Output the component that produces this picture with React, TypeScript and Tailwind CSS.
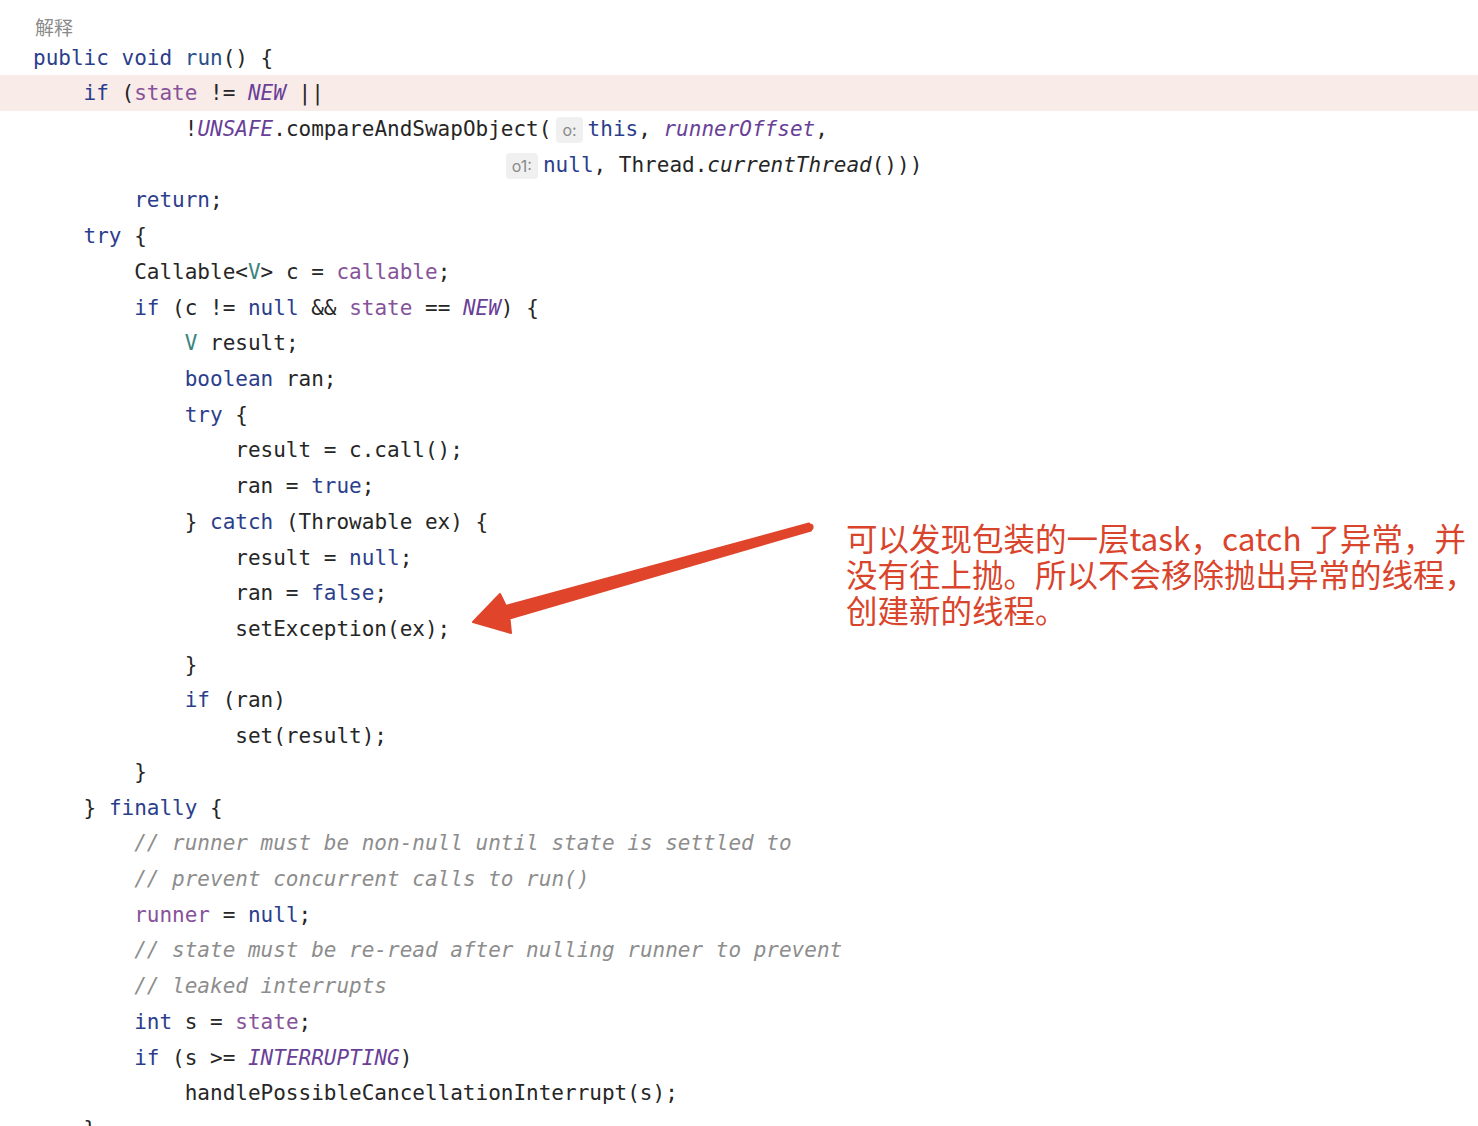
import React from 'react'

const K = 'text-[#2b3e8c]'
const F = 'text-[#86529a]'
const C = 'text-[#6a3f98] italic'
const T = 'text-[#3a8580]'
const M = 'text-[#27508a]'
const S = 'italic'
const CM = 'text-[#8d8d8d] italic'

type Tok = { t: string; c?: string; hint?: boolean }
type Line = { indent: number; toks: Tok[]; hl?: boolean }

const p = (t: string, c?: string): Tok => ({ t, c })
const h = (t: string): Tok => ({ t, hint: true })

const lines: Line[] = [
  { indent: 0, toks: [p('public void', K), p(' '), p('run', M), p('() {')] },
  { indent: 4, hl: true, toks: [p('if', K), p(' ('), p('state', F), p(' != '), p('NEW', C), p(' ||')] },
  {
    indent: 12,
    toks: [p('!'), p('UNSAFE', C), p('.compareAndSwapObject('), h('o:'), p('this', K), p(', '), p('runnerOffset', C), p(',')],
  },
  { indent: 37, toks: [h('o1:'), p('null', K), p(', Thread.'), p('currentThread', S), p('()))')] },
  { indent: 8, toks: [p('return', K), p(';')] },
  { indent: 4, toks: [p('try', K), p(' {')] },
  { indent: 8, toks: [p('Callable<'), p('V', T), p('> c = '), p('callable', F), p(';')] },
  {
    indent: 8,
    toks: [p('if', K), p(' (c != '), p('null', K), p(' && '), p('state', F), p(' == '), p('NEW', C), p(') {')],
  },
  { indent: 12, toks: [p('V', T), p(' result;')] },
  { indent: 12, toks: [p('boolean', K), p(' ran;')] },
  { indent: 12, toks: [p('try', K), p(' {')] },
  { indent: 16, toks: [p('result = c.call();')] },
  { indent: 16, toks: [p('ran = '), p('true', K), p(';')] },
  { indent: 12, toks: [p('} '), p('catch', K), p(' (Throwable ex) {')] },
  { indent: 16, toks: [p('result = '), p('null', K), p(';')] },
  { indent: 16, toks: [p('ran = '), p('false', K), p(';')] },
  { indent: 16, toks: [p('setException(ex);')] },
  { indent: 12, toks: [p('}')] },
  { indent: 12, toks: [p('if', K), p(' (ran)')] },
  { indent: 16, toks: [p('set(result);')] },
  { indent: 8, toks: [p('}')] },
  { indent: 4, toks: [p('} '), p('finally', K), p(' {')] },
  { indent: 8, toks: [p('// runner must be non-null until state is settled to', CM)] },
  { indent: 8, toks: [p('// prevent concurrent calls to run()', CM)] },
  { indent: 8, toks: [p('runner', F), p(' = '), p('null', K), p(';')] },
  { indent: 8, toks: [p('// state must be re-read after nulling runner to prevent', CM)] },
  { indent: 8, toks: [p('// leaked interrupts', CM)] },
  { indent: 8, toks: [p('int', K), p(' s = '), p('state', F), p(';')] },
  { indent: 8, toks: [p('if', K), p(' (s >= '), p('INTERRUPTING', C), p(')')] },
  { indent: 12, toks: [p('handlePossibleCancellationInterrupt(s);')] },
  { indent: 4, toks: [p('}')] },
]

const Hint = ({ text }: { text: string }) => (
  <span className="mx-[5px] inline-block rounded-[4px] bg-[#f0f0f0] px-[6px] align-middle font-['Inter',sans-serif] text-[16px] leading-[26px] not-italic text-[#8a8a8a]">
    {text}
  </span>
)

const App = () => {
  return (
    <div className="relative h-[1126px] w-[1478px] overflow-hidden bg-white">
      {/* little label above the code */}
      <div className="h-[39.5px] pl-[35px] pt-[15px] font-['Noto_Sans_CJK_SC',sans-serif] text-[19px] leading-[24px] text-[#8a8a8a]">
        解释
      </div>

      {/* code block */}
      <div className="font-['DejaVu_Sans_Mono',monospace] text-[21px] text-[#262626]">
        {lines.map((ln, i) => (
          <div
            key={i}
            className={`h-[35.72px] whitespace-pre pl-[33px] leading-[37px] ${ln.hl ? 'bg-[#f9ebe8]' : ''}`}
          >
            {' '.repeat(ln.indent)}
            {ln.toks.map((tk, j) =>
              tk.hint ? (
                <Hint key={j} text={tk.t} />
              ) : (
                <span key={j} className={tk.c}>
                  {tk.t}
                </span>
              )
            )}
          </div>
        ))}
      </div>

      {/* red arrow drawn over the screenshot */}
      <svg className="pointer-events-none absolute left-0 top-0" width="1478" height="1126">
        <polygon
          points="473,622 511,633 509.5,618.5 811,530.5 809,523.5 505.9,605.9 500,594"
          fill="#e0452c"
          stroke="#e0452c"
          strokeWidth="2"
          strokeLinejoin="round"
        />
        <circle cx="810" cy="527" r="3.6" fill="#e0452c" />
      </svg>

      {/* annotation */}
      <div className="absolute left-[846px] top-[519px] whitespace-nowrap font-['Noto_Sans_CJK_SC',sans-serif] text-[31.5px] leading-[36px] text-[#d9442c]">
        <div>可以发现包装的一层task，catch 了异常，并</div>
        <div>没有往上抛。所以不会移除抛出异常的线程，</div>
        <div>创建新的线程。</div>
      </div>
    </div>
  )
}

export default App
